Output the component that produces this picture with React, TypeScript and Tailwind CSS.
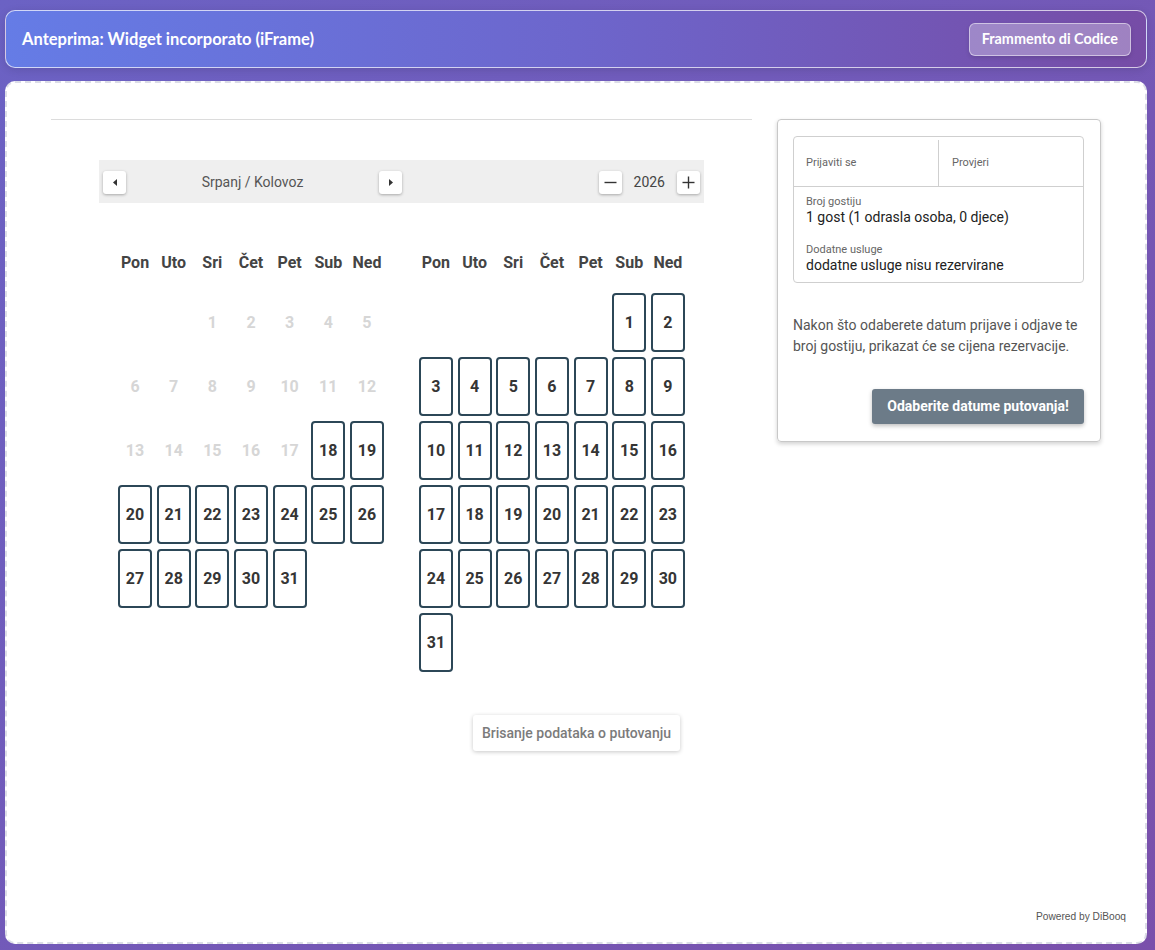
import React from "react";

type Day = { n: number; disabled?: boolean } | null;

const DAY_NAMES = ["Pon", "Uto", "Sri", "Čet", "Pet", "Sub", "Ned"];

// July 2026 starts on Wednesday, August 2026 on Saturday
function buildMonth(offset: number, length: number, disabledUntil: number): Day[] {
  const days: Day[] = Array.from({ length: offset }, () => null);
  for (let n = 1; n <= length; n += 1) {
    days.push({ n, disabled: n <= disabledUntil });
  }
  return days;
}

const july = buildMonth(2, 31, 17);
const august = buildMonth(5, 31, 0);

function NavButton({ dir }: { dir: "left" | "right" }) {
  return (
    <button
      type="button"
      className="flex h-[23px] w-[23px] items-center justify-center rounded-[3px] bg-white shadow-[0_1px_3px_rgba(0,0,0,0.3)]"
    >
      <svg width="4" height="7" viewBox="0 0 4 7">
        {dir === "left" ? <polygon points="4,0 0,3.5 4,7" fill="#333" /> : <polygon points="0,0 4,3.5 0,7" fill="#333" />}
      </svg>
    </button>
  );
}

function StepButton({ plus }: { plus?: boolean }) {
  return (
    <button
      type="button"
      className="flex h-[23px] w-[23px] items-center justify-center rounded-[3px] bg-white shadow-[0_1px_3px_rgba(0,0,0,0.3)]"
    >
      <svg width="13" height="13" viewBox="0 0 13 13">
        <line x1="0.5" y1="6.5" x2="12.5" y2="6.5" stroke="#333" strokeWidth="1.4" />
        {plus ? <line x1="6.5" y1="0.5" x2="6.5" y2="12.5" stroke="#333" strokeWidth="1.4" /> : null}
      </svg>
    </button>
  );
}

function Month({ days }: { days: Day[] }) {
  return (
    <div>
      <div className="grid grid-cols-[repeat(7,34px)] gap-x-[4.67px]">
        {DAY_NAMES.map((name) => (
          <div key={name} className="text-center text-[16px] font-bold leading-[20px] text-[#444]">
            {name}
          </div>
        ))}
      </div>
      <div className="mt-[20px] grid grid-cols-[repeat(7,34px)] gap-x-[4.67px] gap-y-[5px]">
        {days.map((day, index) =>
          day === null ? (
            <div key={`e${index}`} className="h-[59px]" />
          ) : day.disabled ? (
            <div
              key={day.n}
              className="flex h-[59px] items-center justify-center text-[16px] font-bold text-[#d6d6d6]"
            >
              {day.n}
            </div>
          ) : (
            <div
              key={day.n}
              className="flex h-[59px] items-center justify-center rounded-[4px] border-2 border-[#2c4757] text-[16px] font-bold text-[#353535]"
            >
              {day.n}
            </div>
          )
        )}
      </div>
    </div>
  );
}

export default function App() {
  return (
    <div className="flex min-h-[950px] flex-col bg-[linear-gradient(135deg,#6b62c4,#7a50ab)] pb-[6px] pl-[5px] pr-[8px] pt-[10px] font-['Roboto',sans-serif]">
      <header className="flex h-[58px] items-center justify-between rounded-[10px] border border-white/70 bg-[linear-gradient(90deg,#657ce6,#6d66cc_50%,#764ca6)] pl-[16px] pr-[15px] shadow-[0_2px_8px_rgba(0,0,0,0.12)]">
        <h1 className="font-['Lato',sans-serif] text-[16.5px] font-bold text-white">
          Anteprima: Widget incorporato (iFrame)
        </h1>
        <button
          type="button"
          className="h-[33px] rounded-[6px] border border-white/50 bg-white/30 px-[12px] font-['Lato',sans-serif] text-[14.4px] font-bold text-white shadow-[0_2px_4px_rgba(0,0,0,0.12)]"
        >
          Frammento di Codice
        </button>
      </header>

      <main className="mt-[13px] flex h-[863px] flex-col rounded-[10px] border-2 border-dashed border-[#dcdde7] bg-white">
        <div className="flex gap-[25px] pl-[44px] pt-[36px]">
          {/* calendar column */}
          <section className="w-[701px]">
            <div className="h-px bg-[#dcdcdc]" />
            <div className="mx-auto mt-[40px] w-[605px]">
              <div className="flex h-[43px] items-center bg-[#efefef] px-[4px] pt-px">
                <NavButton dir="left" />
                <div className="w-[253px] text-center text-[14px] text-[#555]">Srpanj / Kolovoz</div>
                <NavButton dir="right" />
                <div className="flex-1" />
                <StepButton />
                <span className="mx-[12px] text-[14px] text-[#444]">2026</span>
                <StepButton plus />
              </div>

              <div className="mt-[50px] flex gap-[35px] pl-[19px]">
                <Month days={july} />
                <Month days={august} />
              </div>

              <div className="mt-[43px] flex justify-end pr-[24px]">
                <button
                  type="button"
                  className="h-[36px] rounded-[3px] bg-white px-[9px] text-[14px] font-medium text-[#7b7b7b] shadow-[0_1px_4px_rgba(0,0,0,0.22)]"
                >
                  Brisanje podataka o putovanju
                </button>
              </div>
            </div>
          </section>

          {/* booking summary */}
          <aside className="h-fit w-[324px] rounded-[4px] border border-[#c8c8c8] pb-[17px] pl-[15px] pr-[16px] pt-[16px] shadow-[0_2px_4px_rgba(0,0,0,0.18)]">
            <div className="rounded-[4px] border border-[#cfcfcf]">
              <div className="flex h-[50px] border-b border-[#cfcfcf] pt-[3px]">
                <div className="flex w-[145px] items-center border-r border-[#cfcfcf] pl-[12px] text-[11px] text-[#666]">
                  Prijaviti se
                </div>
                <div className="flex flex-1 items-center pl-[13px] text-[11px] text-[#666]">Provjeri</div>
              </div>
              <div className="px-[12px] pb-[8px] pt-[8px]">
                <div className="text-[11px] leading-[13px] text-[#666]">Broj gostiju</div>
                <div className="text-[14px] leading-[18px] text-[#222]">1 gost (1 odrasla osoba, 0 djece)</div>
                <div className="mt-[17px] text-[11px] leading-[13px] text-[#666]">Dodatne usluge</div>
                <div className="text-[14px] leading-[18px] text-[#222]">dodatne usluge nisu rezervirane</div>
              </div>
            </div>
            <p className="mt-[32px] text-[14px] leading-[21px] text-[#555]">
              Nakon što odaberete datum prijave i odjave te broj gostiju, prikazat će se cijena rezervacije.
            </p>
            <div className="mt-[32px] flex justify-end">
              <button
                type="button"
                className="h-[35px] w-[212px] rounded-[3px] bg-[#6c7b88] text-[14px] font-bold text-white shadow-[0_2px_4px_rgba(0,0,0,0.25)]"
              >
                Odaberite datume putovanja!
              </button>
            </div>
          </aside>
        </div>

        <div className="mt-auto flex justify-end pb-[18px] pr-[19px]">
          <span className="font-['Liberation_Sans',Arial,sans-serif] text-[10.2px] text-[#555]">Powered by DiBooq</span>
        </div>
      </main>
    </div>
  );
}
